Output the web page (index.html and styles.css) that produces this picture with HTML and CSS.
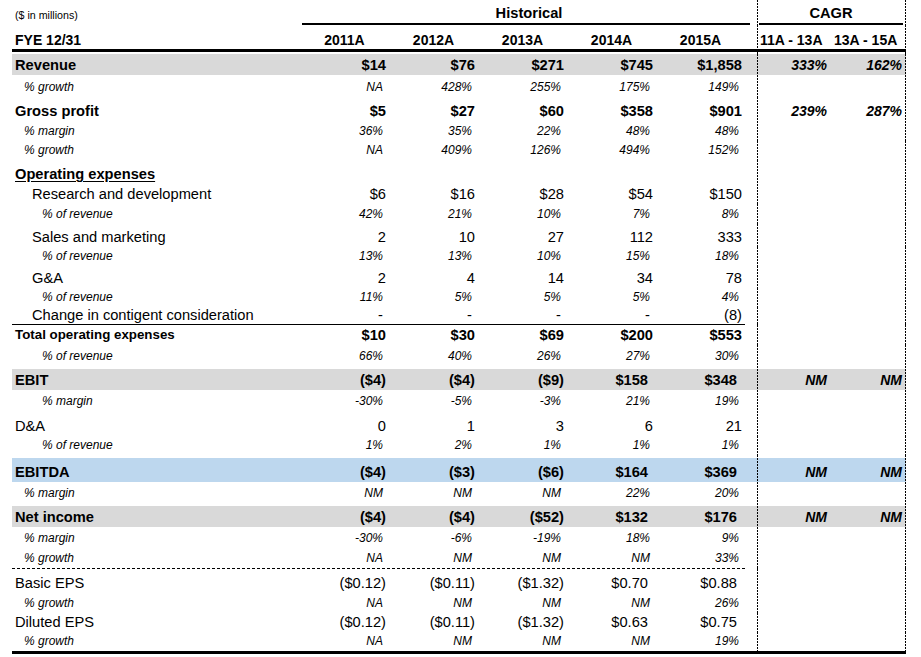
FILE: index.html
```html
<!DOCTYPE html>
<html>
<head>
<meta charset="utf-8">
<link rel="stylesheet" href="styles.css">
</head>
<body>
<div class="sheet">
  <div class="row top">
    <div class="units">($ in millions)</div>
    <div class="hist">Historical</div>
    <div class="gap"></div>
    <div class="cagr">CAGR</div>
  </div>
  <div class="row head">
    <div class="lbl">FYE 12/31</div>
    <div class="v">2011A</div><div class="v">2012A</div><div class="v">2013A</div><div class="v">2014A</div><div class="v">2015A</div>
    <div class="sp"></div>
    <div class="g1">11A - 13A</div><div class="g2">13A - 15A</div>
  </div>
  <div class="row h2"></div>

  <div class="row main gray h21">
    <div class="lbl">Revenue</div>
    <div class="v">$14</div><div class="v">$76</div><div class="v">$271</div><div class="v">$745</div><div class="v">$1,858</div>
    <div class="sp"></div>
    <div class="g1">333%</div><div class="g2">162%</div>
  </div>
  <div class="row pct h22">
    <div class="lbl i1">% growth</div>
    <div class="v">NA</div><div class="v">428%</div><div class="v">255%</div><div class="v">175%</div><div class="v">149%</div>
  </div>
  <div class="row main h24">
    <div class="lbl">Gross profit</div>
    <div class="v">$5</div><div class="v">$27</div><div class="v">$60</div><div class="v">$358</div><div class="v">$901</div>
    <div class="sp"></div>
    <div class="g1">239%</div><div class="g2">287%</div>
  </div>
  <div class="row pct h20">
    <div class="lbl i1">% margin</div>
    <div class="v">36%</div><div class="v">35%</div><div class="v">22%</div><div class="v">48%</div><div class="v">48%</div>
  </div>
  <div class="row pct h19">
    <div class="lbl i1">% growth</div>
    <div class="v">NA</div><div class="v">409%</div><div class="v">126%</div><div class="v">494%</div><div class="v">152%</div>
  </div>

  <div class="row main h24">
    <div class="lbl u">Operating expenses</div>
  </div>
  <div class="row sub h20">
    <div class="lbl">Research and development</div>
    <div class="v">$6</div><div class="v">$16</div><div class="v">$28</div><div class="v">$54</div><div class="v">$150</div>
  </div>
  <div class="row pct h20">
    <div class="lbl i2">% of revenue</div>
    <div class="v">42%</div><div class="v">21%</div><div class="v">10%</div><div class="v">7%</div><div class="v">8%</div>
  </div>
  <div class="row sub h23">
    <div class="lbl">Sales and marketing</div>
    <div class="v">2</div><div class="v">10</div><div class="v">27</div><div class="v">112</div><div class="v">333</div>
  </div>
  <div class="row pct h19">
    <div class="lbl i2">% of revenue</div>
    <div class="v">13%</div><div class="v">13%</div><div class="v">10%</div><div class="v">15%</div><div class="v">18%</div>
  </div>
  <div class="row sub h22">
    <div class="lbl">G&amp;A</div>
    <div class="v">2</div><div class="v">4</div><div class="v">14</div><div class="v">34</div><div class="v">78</div>
  </div>
  <div class="row pct h19">
    <div class="lbl i2">% of revenue</div>
    <div class="v">11%</div><div class="v">5%</div><div class="v">5%</div><div class="v">5%</div><div class="v">4%</div>
  </div>
  <div class="row sub tight h17">
    <div class="lbl">Change in contigent consideration</div>
    <div class="v dash">-</div><div class="v dash">-</div><div class="v dash">-</div><div class="v dash">-</div><div class="v">(8)</div>
  </div>
  <div class="row h1"><div class="rule"></div></div>
  <div class="row main h20">
    <div class="lbl small">Total operating expenses</div>
    <div class="v">$10</div><div class="v">$30</div><div class="v">$69</div><div class="v">$200</div><div class="v">$553</div>
  </div>
  <div class="row pct h21">
    <div class="lbl i2">% of revenue</div>
    <div class="v">66%</div><div class="v">40%</div><div class="v">26%</div><div class="v">27%</div><div class="v">30%</div>
  </div>
  <div class="row h3"></div>

  <div class="row main gray h21">
    <div class="lbl">EBIT</div>
    <div class="v">($4)</div><div class="v">($4)</div><div class="v">($9)</div><div class="v pp">$158</div><div class="v pp">$348</div>
    <div class="sp"></div>
    <div class="g1">NM</div><div class="g2">NM</div>
  </div>
  <div class="row pct h21">
    <div class="lbl i2">% margin</div>
    <div class="v">-30%</div><div class="v">-5%</div><div class="v">-3%</div><div class="v">21%</div><div class="v">19%</div>
  </div>
  <div class="row plain h25">
    <div class="lbl">D&amp;A</div>
    <div class="v">0</div><div class="v">1</div><div class="v">3</div><div class="v">6</div><div class="v">21</div>
  </div>
  <div class="row pct h19">
    <div class="lbl i2">% of revenue</div>
    <div class="v">1%</div><div class="v">2%</div><div class="v">1%</div><div class="v">1%</div><div class="v">1%</div>
  </div>
  <div class="row h3"></div>

  <div class="row main blue h24">
    <div class="lbl">EBITDA</div>
    <div class="v">($4)</div><div class="v">($3)</div><div class="v">($6)</div><div class="v pp">$164</div><div class="v pp">$369</div>
    <div class="sp"></div>
    <div class="g1">NM</div><div class="g2">NM</div>
  </div>
  <div class="row pct h21">
    <div class="lbl i1">% margin</div>
    <div class="v">NM</div><div class="v">NM</div><div class="v">NM</div><div class="v">22%</div><div class="v">20%</div>
  </div>
  <div class="row h3"></div>

  <div class="row main gray h21">
    <div class="lbl">Net income</div>
    <div class="v">($4)</div><div class="v">($4)</div><div class="v">($52)</div><div class="v pp">$132</div><div class="v pp">$176</div>
    <div class="sp"></div>
    <div class="g1">NM</div><div class="g2">NM</div>
  </div>
  <div class="row pct h21">
    <div class="lbl i1">% margin</div>
    <div class="v">-30%</div><div class="v">-6%</div><div class="v">-19%</div><div class="v">18%</div><div class="v">9%</div>
  </div>
  <div class="row pct h20">
    <div class="lbl i1">% growth</div>
    <div class="v">NA</div><div class="v">NM</div><div class="v">NM</div><div class="v">NM</div><div class="v">33%</div>
  </div>
  <div class="row h1"><div class="rule dashed"></div></div>

  <div class="row plain h24">
    <div class="lbl">Basic EPS</div>
    <div class="v">($0.12)</div><div class="v">($0.11)</div><div class="v">($1.32)</div><div class="v pp">$0.70</div><div class="v pp">$0.88</div>
  </div>
  <div class="row pct h20">
    <div class="lbl i1">% growth</div>
    <div class="v">NA</div><div class="v">NM</div><div class="v">NM</div><div class="v">NM</div><div class="v">26%</div>
  </div>
  <div class="row plain h19">
    <div class="lbl">Diluted EPS</div>
    <div class="v">($0.12)</div><div class="v">($0.11)</div><div class="v">($1.32)</div><div class="v pp">$0.63</div><div class="v pp">$0.75</div>
  </div>
  <div class="row pct h19">
    <div class="lbl i1">% growth</div>
    <div class="v">NA</div><div class="v">NM</div><div class="v">NM</div><div class="v">NM</div><div class="v">19%</div>
  </div>
  <div class="end"></div>
</div>
</body>
</html>
```

FILE: styles.css
```css
* { box-sizing: border-box; }

html, body {
  margin: 0;
  padding: 0;
  background: #ffffff;
}

.sheet {
  margin-left: 12px;
  width: 894px;
  font-family: "Liberation Sans", Arial, sans-serif;
  color: #000;
}

.row {
  display: flex;
  align-items: flex-end;
  width: 894px;
  font-size: 14.67px;
  line-height: 20px;
  white-space: nowrap;
  background-image:
    repeating-linear-gradient(to bottom, #000 0 2px, transparent 2px 3px),
    repeating-linear-gradient(to bottom, #000 0 2px, transparent 2px 3px);
  background-size: 1px 100%, 1px 100%;
  background-position: 745px 0, 893px 0;
  background-repeat: no-repeat;
}

.h1 { height: 1px; align-items: flex-start; }
.h2 { height: 2px; }
.h3 { height: 3px; }
.h17 { height: 17px; }
.h19 { height: 19px; }
.h20 { height: 20px; }
.h21 { height: 21px; }
.h22 { height: 22px; }
.h23 { height: 23px; }
.h24 { height: 24px; }
.h25 { height: 25px; }

.gray { background-color: #d9d9d9; }
.blue { background-color: #bdd7ee; }

/* top header */
.top { height: 25px; font-weight: bold; }
.units {
  width: 290px;
  padding-left: 3px;
  padding-bottom: 2px;
  font-size: 10.67px;
  font-weight: normal;
  line-height: 15px;
}
.hist {
  width: 448px;
  padding-left: 6px;
  text-align: center;
  border-bottom: 2px solid #000;
}
.gap { width: 9px; }
.cagr {
  width: 144px;
  text-align: center;
  border-bottom: 2px solid #000;
}

.head {
  height: 27px;
  border-bottom: 3px solid #000;
  font-size: 14px;
  font-weight: bold;
  line-height: 18px;
}
.head .v { text-align: center; padding-right: 0; }
.head .g1, .head .g2 { text-align: left; padding-left: 3px; padding-right: 0; font-style: normal; }

/* columns */
.lbl { width: 288px; padding-left: 3px; }
.v { width: 89px; text-align: right; padding-right: 3px; }
.sp { width: 12px; }
.g1 { width: 74px; text-align: right; padding-right: 4px; }
.g2 { width: 75px; text-align: right; padding-right: 4px; }

/* row styles */
.main { font-weight: bold; }
.main .g1, .main .g2 { font-style: italic; font-size: 14px; }
.sub .lbl { padding-left: 20px; }
.tight { line-height: 17px; }

.pct { font-size: 12px; font-style: italic; }
.pct .v { padding-right: 6px; }
.i1 { padding-left: 12px; }
.i2 { padding-left: 30px; }

.u { text-decoration: underline; text-underline-offset: 2px; }
.small { font-size: 13.33px; }

.v.pp { padding-right: 8px; }
.v.dash { padding-right: 6px; }

.rule {
  width: 733px;
  height: 1px;
  background: #000;
}
.rule.dashed {
  background: repeating-linear-gradient(to right, #000 0 3px, transparent 3px 5px);
}

.end {
  width: 894px;
  height: 3px;
  background: #000;
}
```
